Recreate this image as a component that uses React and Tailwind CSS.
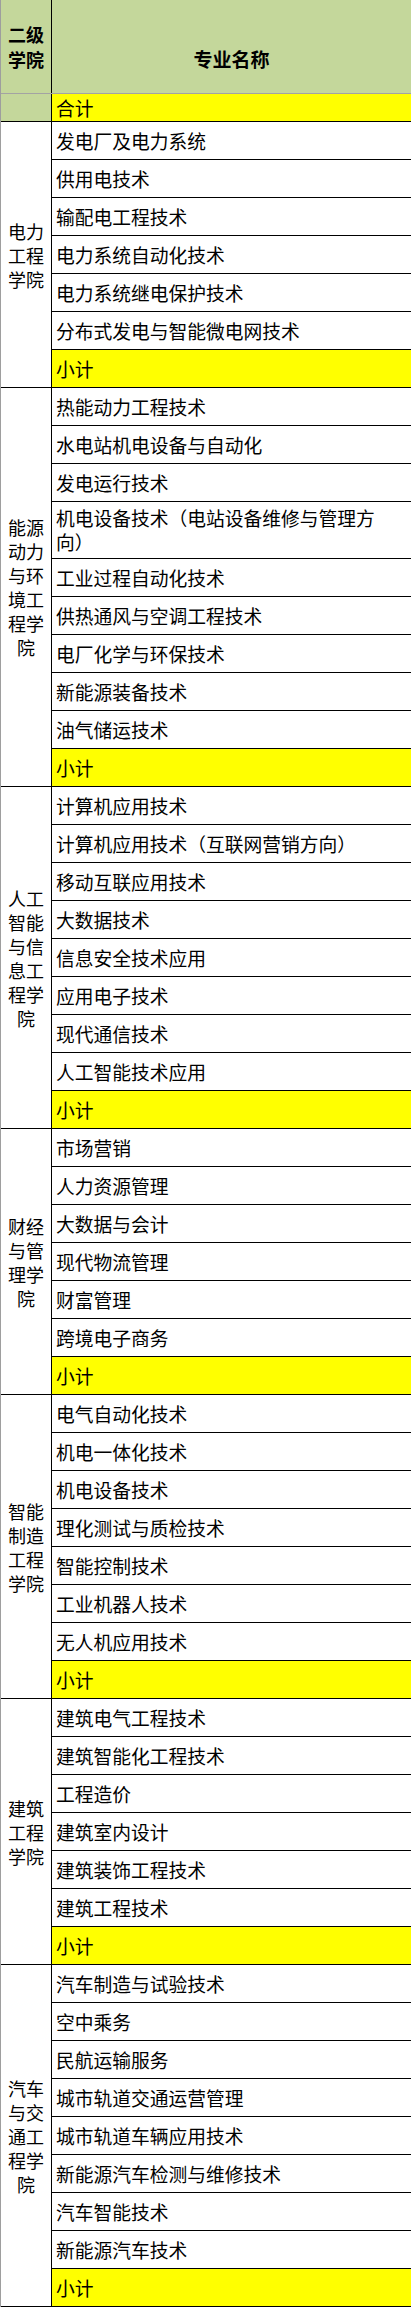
import React from "react";

const groups = [
  {
    name: ["电力", "工程", "学院"],
    items: [
      "发电厂及电力系统",
      "供用电技术",
      "输配电工程技术",
      "电力系统自动化技术",
      "电力系统继电保护技术",
      "分布式发电与智能微电网技术",
    ],
  },
  {
    name: ["能源", "动力", "与环", "境工", "程学", "院"],
    items: [
      "热能动力工程技术",
      "水电站机电设备与自动化",
      "发电运行技术",
      ["机电设备技术（电站设备维修与管理方", "向）"],
      "工业过程自动化技术",
      "供热通风与空调工程技术",
      "电厂化学与环保技术",
      "新能源装备技术",
      "油气储运技术",
    ],
  },
  {
    name: ["人工", "智能", "与信", "息工", "程学", "院"],
    items: [
      "计算机应用技术",
      "计算机应用技术（互联网营销方向）",
      "移动互联应用技术",
      "大数据技术",
      "信息安全技术应用",
      "应用电子技术",
      "现代通信技术",
      "人工智能技术应用",
    ],
  },
  {
    name: ["财经", "与管", "理学", "院"],
    items: [
      "市场营销",
      "人力资源管理",
      "大数据与会计",
      "现代物流管理",
      "财富管理",
      "跨境电子商务",
    ],
  },
  {
    name: ["智能", "制造", "工程", "学院"],
    items: [
      "电气自动化技术",
      "机电一体化技术",
      "机电设备技术",
      "理化测试与质检技术",
      "智能控制技术",
      "工业机器人技术",
      "无人机应用技术",
    ],
  },
  {
    name: ["建筑", "工程", "学院"],
    items: [
      "建筑电气工程技术",
      "建筑智能化工程技术",
      "工程造价",
      "建筑室内设计",
      "建筑装饰工程技术",
      "建筑工程技术",
    ],
  },
  {
    name: ["汽车", "与交", "通工", "程学", "院"],
    items: [
      "汽车制造与试验技术",
      "空中乘务",
      "民航运输服务",
      "城市轨道交通运营管理",
      "城市轨道车辆应用技术",
      "新能源汽车检测与维修技术",
      "汽车智能技术",
      "新能源汽车技术",
    ],
  },
];

const font = { fontFamily: '"Noto Sans CJK SC", "Noto Sans", sans-serif' };

function Row({ item }) {
  if (Array.isArray(item)) {
    return (
      <div className="h-[57px] border-b border-black flex flex-col justify-center pl-[4px] text-[18.75px] leading-[24px] text-black">
        <div className="whitespace-nowrap">{item[0]}</div>
        <div className="whitespace-nowrap">{item[1]}</div>
      </div>
    );
  }
  return (
    <div className="h-[38px] border-b border-black flex items-center pl-[4px] text-[18.75px] leading-[24px] text-black whitespace-nowrap overflow-hidden">
      {item}
    </div>
  );
}

export default function App() {
  return (
    <div className="w-[411px] bg-white overflow-hidden" style={font}>
      <div className="border-l border-[#9e9e9e]">
        {/* header */}
        <div className="flex h-[94px] bg-[#c4d79b] border-b border-[#a3a3a3]">
          <div className="w-[51px] shrink-0 border-r border-black flex flex-col items-center justify-center text-[18px] leading-[25px] font-bold text-black">
            <div>二级</div>
            <div>学院</div>
          </div>
          <div className="flex-1 flex justify-center items-start pt-[46px] text-[19px] leading-[26px] font-bold text-black">
            专业名称
          </div>
        </div>
        {/* total */}
        <div className="flex h-[28px] border-b border-black">
          <div className="w-[51px] shrink-0 bg-[#c4d79b] border-r border-black"></div>
          <div className="flex-1 bg-[#ffff00] flex items-center pl-[4px] text-[18.75px] leading-[24px] text-black">
            合计
          </div>
        </div>
        {groups.map((g, gi) => (
          <div key={gi} className="flex border-b border-black">
            <div className="w-[51px] shrink-0 border-r border-black flex flex-col items-center justify-center text-[18px] leading-[24px] text-black">
              {g.name.map((n, i) => (
                <div key={i}>{n}</div>
              ))}
            </div>
            <div className="flex-1 min-w-0">
              {g.items.map((it, i) => (
                <Row key={i} item={it} />
              ))}
              <div className="h-[37px] bg-[#ffff00] flex items-center pl-[4px] text-[18.75px] leading-[24px] text-black">
                小计
              </div>
            </div>
          </div>
        ))}
      </div>
    </div>
  );
}
